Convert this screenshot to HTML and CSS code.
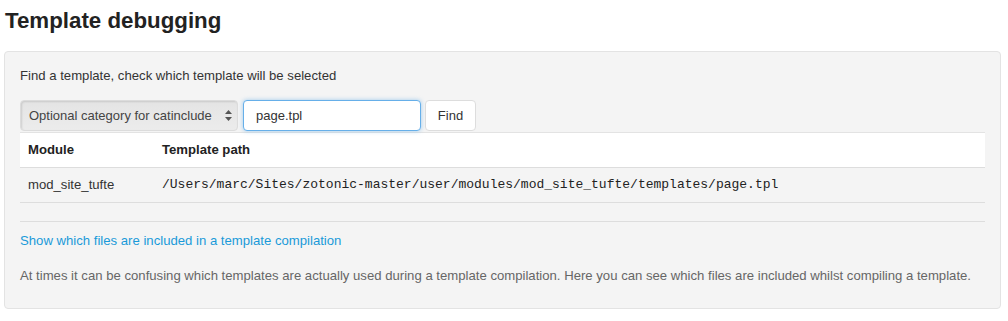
FILE: index.html
```html
<!DOCTYPE html>
<html lang="en">
<head>
  <meta charset="UTF-8" />
  <title>Template debugging</title>
  <link rel="stylesheet" href="styles.css">
</head>
<body>

  <h1>Template debugging</h1>

  <div class="well">
    <p class="intro">Find a template, check which template will be selected</p>

    <form class="find-form" onsubmit="return false;">
      <span class="select-wrap">
        <select class="cat-select">
          <option>Optional category for catinclude</option>
        </select>
        <svg class="select-arrows" width="7" height="11" viewBox="0 0 7 11">
          <path d="M3.5 0 L7 4 L0 4 Z M3.5 11 L7 7 L0 7 Z" fill="#555"/>
        </svg>
      </span>
      <input type="text" class="tpl-input" value="page.tpl" />
      <button class="find-btn">Find</button>
    </form>

    <table class="result">
      <thead>
        <tr>
          <th class="col-module">Module</th>
          <th>Template path</th>
        </tr>
      </thead>
      <tbody>
        <tr>
          <td>mod_site_tufte</td>
          <td class="path">/Users/marc/Sites/zotonic-master/user/modules/mod_site_tufte/templates/page.tpl</td>
        </tr>
      </tbody>
    </table>

    <hr />

    <a href="#" class="show-link">Show which files are included in a template compilation</a>

    <p class="help">At times it can be confusing which templates are actually used during a template compilation. Here you can see which files are included whilst compiling a template.</p>
  </div>

</body>
</html>
```

FILE: styles.css
```css
body {
  font-family: "Liberation Sans", Arial, Helvetica, sans-serif;
  font-size: 13.15px;
  line-height: 18px;
  color: #333;
  background-color: #ffffff;
  margin: 0;
  padding: 0 7px 0 4px;
}

h1 {
  font-size: 22.3px;
  font-weight: 700;
  line-height: 30px;
  color: #222;
  margin: 6px 0 15px 1px;
}

.well {
  background-color: #f4f4f4;
  border: 1px solid #e3e3e3;
  border-radius: 4px;
  padding: 15px 15px 23px 15px;
}

.intro {
  margin: 0 0 15px 0;
}

.find-form {
  display: flex;
  align-items: stretch;
  height: 31px;
}

.select-wrap {
  position: relative;
  display: block;
  width: 218px;
  margin-right: 5px;
}

.cat-select {
  -webkit-appearance: none;
  appearance: none;
  width: 100%;
  height: 31px;
  border: 1px solid #dcdcdc;
  border-radius: 4px;
  background: linear-gradient(#e4e4e4, #ececec);
  box-shadow: inset 1px 1px 2px rgba(0, 0, 0, 0.12);
  font-family: inherit;
  font-size: 13px;
  color: #444;
  padding: 0 20px 0 8px;
}

.select-arrows {
  position: absolute;
  right: 6px;
  top: 10px;
}

.tpl-input {
  width: 178px;
  height: 31px;
  box-sizing: border-box;
  border: 1px solid #66afe9;
  border-radius: 4px;
  box-shadow: 0 0 4px rgba(102, 175, 233, 0.6);
  font-family: inherit;
  font-size: 13px;
  color: #333;
  padding: 0 12px;
  margin-right: 4px;
  outline: none;
}

.find-btn {
  width: 51px;
  height: 31px;
  border: 1px solid #ddd;
  border-radius: 4px;
  background-color: #fff;
  font-family: inherit;
  font-size: 13px;
  color: #333;
  padding: 0;
}

.result {
  width: 100%;
  border-collapse: collapse;
  margin-top: 1px;
}

.result th,
.result td {
  text-align: left;
  padding: 8px 8px 8px 8px;
  border-bottom: 1px solid #ddd;
}

.result thead th {
  background-color: #fff;
  font-weight: 700;
  color: #222;
  border-top: 1px solid #e3e3e3;
}

.col-module {
  width: 118px;
}

.path {
  font-family: "Liberation Mono", "Courier New", monospace;
  font-size: 13px;
  color: #222;
}

hr {
  border: none;
  border-top: 1px solid #ddd;
  margin: 18px 0 10px 0;
}

.show-link {
  display: block;
  color: #1a9ad9;
  text-decoration: none;
}

.help {
  color: #666;
  margin: 17px 0 0 0;
}
```
